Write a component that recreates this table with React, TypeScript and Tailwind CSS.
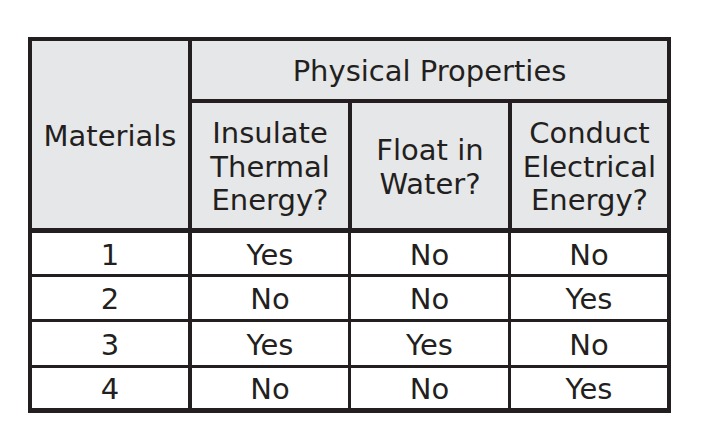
export default function App() {
  const rows = [
    { id: "1", insulate: "Yes", float: "No", conduct: "No", h: "h-[44px]" },
    { id: "2", insulate: "No", float: "No", conduct: "Yes", h: "h-[45px]" },
    { id: "3", insulate: "Yes", float: "Yes", conduct: "No", h: "h-[46px]" },
    { id: "4", insulate: "No", float: "No", conduct: "Yes", h: "h-[40px]" },
  ];

  return (
    <div className="w-[712px] h-[448px] bg-white pt-[37px] pl-[28px] text-[#231f20] font-['DejaVu_Sans',sans-serif] text-[29px]">
      <div className="w-[643px] border-4 border-b-[5px] border-[#231f20]">
        {/* header */}
        <div className="flex bg-[#e6e7e8] border-b-[5px] border-[#231f20]">
          <div className="w-[160px] border-r-4 border-[#231f20] flex items-center justify-center pt-[4px]">
            Materials
          </div>
          <div className="flex-1 flex flex-col">
            <div className="h-[62px] border-b-4 border-[#231f20] flex items-center justify-center pt-[3px]">
              Physical Properties
            </div>
            <div className="flex h-[125px] leading-[33.5px] text-center">
              <div className="w-[160px] border-r-4 border-[#231f20] flex items-center justify-center pt-[4px]">
                <span>
                  Insulate
                  <br />
                  Thermal
                  <br />
                  Energy?
                </span>
              </div>
              <div className="w-[160px] border-r-4 border-[#231f20] flex items-center justify-center pt-[4px]">
                <span>
                  Float in
                  <br />
                  Water?
                </span>
              </div>
              <div className="flex-1 flex items-center justify-center pt-[4px]">
                <span>
                  Conduct
                  <br />
                  Electrical
                  <br />
                  Energy?
                </span>
              </div>
            </div>
          </div>
        </div>
        {/* body */}
        {rows.map((r, i) => (
          <div
            key={r.id}
            className={`flex ${r.h} ${i < rows.length - 1 ? "border-b-[3px] border-[#231f20]" : ""}`}
          >
            <div className="w-[160px] border-r-4 border-[#231f20] flex items-center justify-center pt-[4px]">
              {r.id}
            </div>
            <div className="w-[159px] border-r-[3px] border-[#231f20] flex items-center justify-center pt-[4px]">
              {r.insulate}
            </div>
            <div className="w-[160px] border-r-[3px] border-[#231f20] flex items-center justify-center pt-[4px]">
              {r.float}
            </div>
            <div className="flex-1 flex items-center justify-center pt-[4px]">
              {r.conduct}
            </div>
          </div>
        ))}
      </div>
    </div>
  );
}
